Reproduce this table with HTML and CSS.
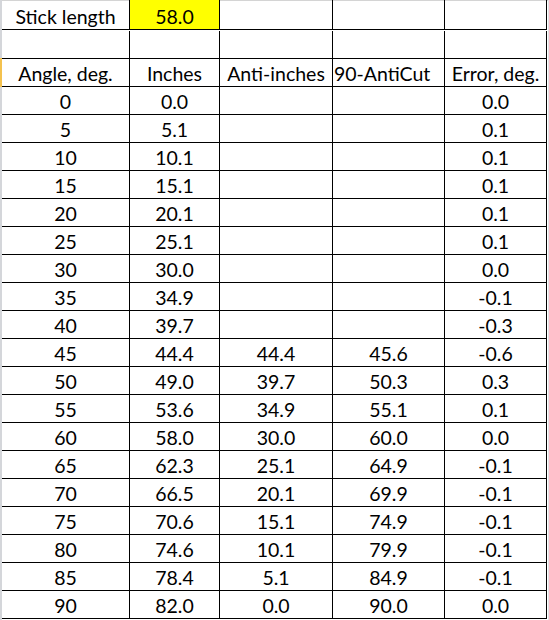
FILE: index.html
```html
<!DOCTYPE html>
<html>
<head>
<meta charset="utf-8">
<title>Stick length</title>
<link rel="stylesheet" href="styles.css">
</head>
<body>
<div class="sheet">
  <div class="rowhdr">
    <div class="rh rh-top"></div>
    <div class="rh rh-sel"></div>
    <div class="rh rh-rest"></div>
  </div>
  <div class="grid">
    <div class="c first">Stick length</div>
    <div class="c first yellow">58.0</div>
    <div class="c first"></div>
    <div class="c first"></div>
    <div class="c first"></div>

    <div class="c"></div><div class="c"></div><div class="c"></div><div class="c"></div><div class="c"></div>

    <div class="c">Angle, deg.</div>
    <div class="c">Inches</div>
    <div class="c">Anti-inches</div>
    <div class="c left">90-AntiCut</div>
    <div class="c">Error, deg.</div>

    <div class="c">0</div><div class="c">0.0</div><div class="c"></div><div class="c"></div><div class="c">0.0</div>
    <div class="c">5</div><div class="c">5.1</div><div class="c"></div><div class="c"></div><div class="c">0.1</div>
    <div class="c">10</div><div class="c">10.1</div><div class="c"></div><div class="c"></div><div class="c">0.1</div>
    <div class="c">15</div><div class="c">15.1</div><div class="c"></div><div class="c"></div><div class="c">0.1</div>
    <div class="c">20</div><div class="c">20.1</div><div class="c"></div><div class="c"></div><div class="c">0.1</div>
    <div class="c">25</div><div class="c">25.1</div><div class="c"></div><div class="c"></div><div class="c">0.1</div>
    <div class="c">30</div><div class="c">30.0</div><div class="c"></div><div class="c"></div><div class="c">0.0</div>
    <div class="c">35</div><div class="c">34.9</div><div class="c"></div><div class="c"></div><div class="c">-0.1</div>
    <div class="c">40</div><div class="c">39.7</div><div class="c"></div><div class="c"></div><div class="c">-0.3</div>
    <div class="c">45</div><div class="c">44.4</div><div class="c">44.4</div><div class="c">45.6</div><div class="c">-0.6</div>
    <div class="c">50</div><div class="c">49.0</div><div class="c">39.7</div><div class="c">50.3</div><div class="c">0.3</div>
    <div class="c">55</div><div class="c">53.6</div><div class="c">34.9</div><div class="c">55.1</div><div class="c">0.1</div>
    <div class="c">60</div><div class="c">58.0</div><div class="c">30.0</div><div class="c">60.0</div><div class="c">0.0</div>
    <div class="c">65</div><div class="c">62.3</div><div class="c">25.1</div><div class="c">64.9</div><div class="c">-0.1</div>
    <div class="c">70</div><div class="c">66.5</div><div class="c">20.1</div><div class="c">69.9</div><div class="c">-0.1</div>
    <div class="c">75</div><div class="c">70.6</div><div class="c">15.1</div><div class="c">74.9</div><div class="c">-0.1</div>
    <div class="c">80</div><div class="c">74.6</div><div class="c">10.1</div><div class="c">79.9</div><div class="c">-0.1</div>
    <div class="c">85</div><div class="c">78.4</div><div class="c">5.1</div><div class="c">84.9</div><div class="c">-0.1</div>
    <div class="c">90</div><div class="c">82.0</div><div class="c">0.0</div><div class="c">90.0</div><div class="c">0.0</div>
  </div>
  <div class="gap"></div>
  <div class="edge"></div>
</div>
</body>
</html>
```

FILE: styles.css
```css
html, body {
  margin: 0;
  padding: 0;
  background: #ffffff;
}

.sheet {
  display: flex;
  align-items: stretch;
  width: 549px;
  height: 620px;
  overflow: hidden;
  font-family: Lato, "Liberation Sans", sans-serif;
  font-size: 19.5px;
  color: #000000;
}

.rowhdr {
  width: 2px;
  display: flex;
  flex-direction: column;
  flex: none;
}

.rh { background: #d4d6da; }
.rh-top { height: 58px; }
.rh-sel { height: 29px; background: #f4c24f; }
.rh-rest { flex: 1; }

.grid {
  flex: none;
  display: grid;
  grid-template-columns: 128px 90px 113px 112px 102px;
  grid-template-rows: 30px repeat(21, 28px);
  align-self: flex-start;
  border-top: 1px solid #d4d4d4;
}

.c {
  box-sizing: border-box;
  border-right: 1px solid #000000;
  border-bottom: 1px solid #000000;
  display: flex;
  align-items: flex-end;
  justify-content: center;
  line-height: 19px;
  padding-bottom: 3px;
  white-space: nowrap;
}

.c.left {
  justify-content: flex-start;
  padding-left: 1px;
}

.c.first {
  height: 30px;
  margin-top: -1px;
  padding-bottom: 3px;
}

.yellow {
  background: #ffff00;
}

.gap {
  width: 1px;
  flex: none;
  border-top: 1px solid #d4d4d4;
}

.edge {
  width: 1px;
  flex: none;
  background: #e2e3e5;
}
```
